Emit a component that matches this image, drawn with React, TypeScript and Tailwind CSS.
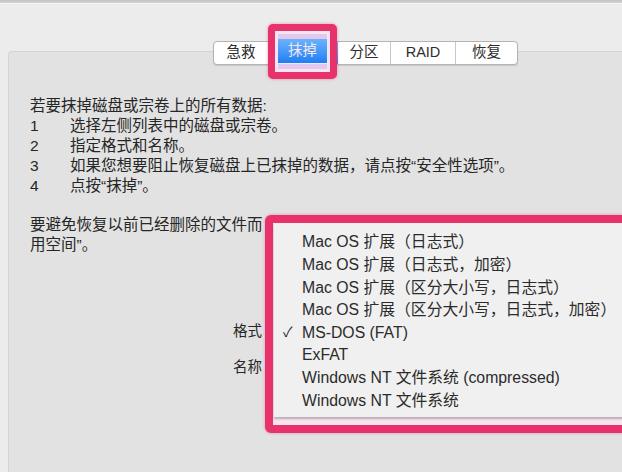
import { Fragment } from "react";

const steps = [
  ["1", "选择左侧列表中的磁盘或宗卷。"],
  ["2", "指定格式和名称。"],
  ["3", "如果您想要阻止恢复磁盘上已抹掉的数据，请点按“安全性选项”。"],
  ["4", "点按“抹掉”。"],
];

const formats = [
  "Mac OS 扩展（日志式）",
  "Mac OS 扩展（日志式，加密）",
  "Mac OS 扩展（区分大小写，日志式）",
  "Mac OS 扩展（区分大小写，日志式，加密）",
  "MS-DOS (FAT)",
  "ExFAT",
  "Windows NT 文件系统 (compressed)",
  "Windows NT 文件系统",
];

const font = "font-['Liberation_Sans','Noto_Sans_CJK_SC',sans-serif]";

function Tabs() {
  return (
    <div className="-mt-[11px] ml-[204px] flex h-[24px] w-[305px] overflow-hidden rounded-[4px] border border-[#b3b3b3] bg-white text-[14.5px] text-[#2d2d2d] shadow-[0_1px_1px_rgba(0,0,0,0.12)]">
      <div className="flex w-[55px] items-center justify-center border-r border-[#c8c8c8]">急救</div>
      {/* selected segment, its label sits in the highlight overlay */}
      <div className="w-[69px] bg-gradient-to-b from-[#6bb2fb] to-[#1b80f6]" />
      <div className="flex w-[53px] items-center justify-center border-r border-[#c8c8c8]">分区</div>
      <div className="flex w-[65px] items-center justify-center border-r border-[#c8c8c8]">RAID</div>
      <div className="flex flex-1 items-center justify-center">恢复</div>
    </div>
  );
}

export default function App() {
  return (
    <div className={`relative h-[472px] w-[622px] overflow-hidden bg-[#ececec] ${font}`}>
      <div className="h-[3px] bg-gradient-to-b from-[#c2c2c2] to-[#d4d4d4]" />
      <div className="h-[1px] bg-[#f5f5f5]" />

      <div className="ml-[8px] mt-[47px] h-[430px] rounded-tl-[4px] border-l border-t border-[#d4d4d4] bg-[#e2e2e2]">
        <Tabs />

        <div className="ml-[21px] mt-[31px] text-[15.5px] leading-[20px] text-[#262626]">
          <p className="whitespace-nowrap">若要抹掉磁盘或宗卷上的所有数据:</p>
          <div className="grid grid-cols-[40px_auto]">
            {steps.map(([n, t]) => (
              <Fragment key={n}>
                <span>{n}</span>
                <span className="whitespace-nowrap">{t}</span>
              </Fragment>
            ))}
          </div>
          <p className="mt-[19px] whitespace-nowrap">要避免恢复以前已经删除的文件而</p>
          <p className="whitespace-nowrap">用空间”。</p>
        </div>

        <div className="ml-[211px] mt-[66px] flex w-[42px] flex-col gap-[16px] text-right text-[14.5px] leading-[20px] text-[#262626]">
          <span>格式</span>
          <span>名称</span>
        </div>
      </div>

      {/* highlighted tab */}
      <div className="absolute left-[268px] top-[24px] flex h-[55px] w-[69px] flex-col rounded-[5px] border-[7px] border-[#e8326b] bg-[#f6e6f3] px-[3px] py-[3px] shadow-[0_0_3px_rgba(232,50,107,0.5)]">
        <div className="h-[5px] bg-[#e2c8ec]" />
        <div className="flex h-[24px] items-center justify-center bg-gradient-to-b from-[#6bb2fb] to-[#1b7ff5] text-[14.5px] text-[#f3e7f1]">
          抹掉
        </div>
        <div className="mt-[1px] h-[5px] bg-[#e2c8ec]" />
      </div>

      {/* format popup menu */}
      <div className="absolute left-[265px] top-[215px] h-[218px] w-[380px] rounded-[6px] border-[8px] border-[#e8326b] bg-[#f7e4ee] shadow-[0_0_3px_rgba(232,50,107,0.5)]">
        <div className="ml-[1px] h-[194px] bg-[#f0f0f0] pt-[8px] shadow-[0_2px_2px_rgba(0,0,0,0.25)]">
          {formats.map((f) => (
            <div key={f} className="flex h-[22.6px] items-center text-[15.8px] text-[#2b2b2b]">
              <span className="w-[28px] pl-[9px] text-[14px]">{f === "MS-DOS (FAT)" ? "✓" : ""}</span>
              <span className="whitespace-nowrap">{f}</span>
            </div>
          ))}
        </div>
      </div>
    </div>
  );
}
